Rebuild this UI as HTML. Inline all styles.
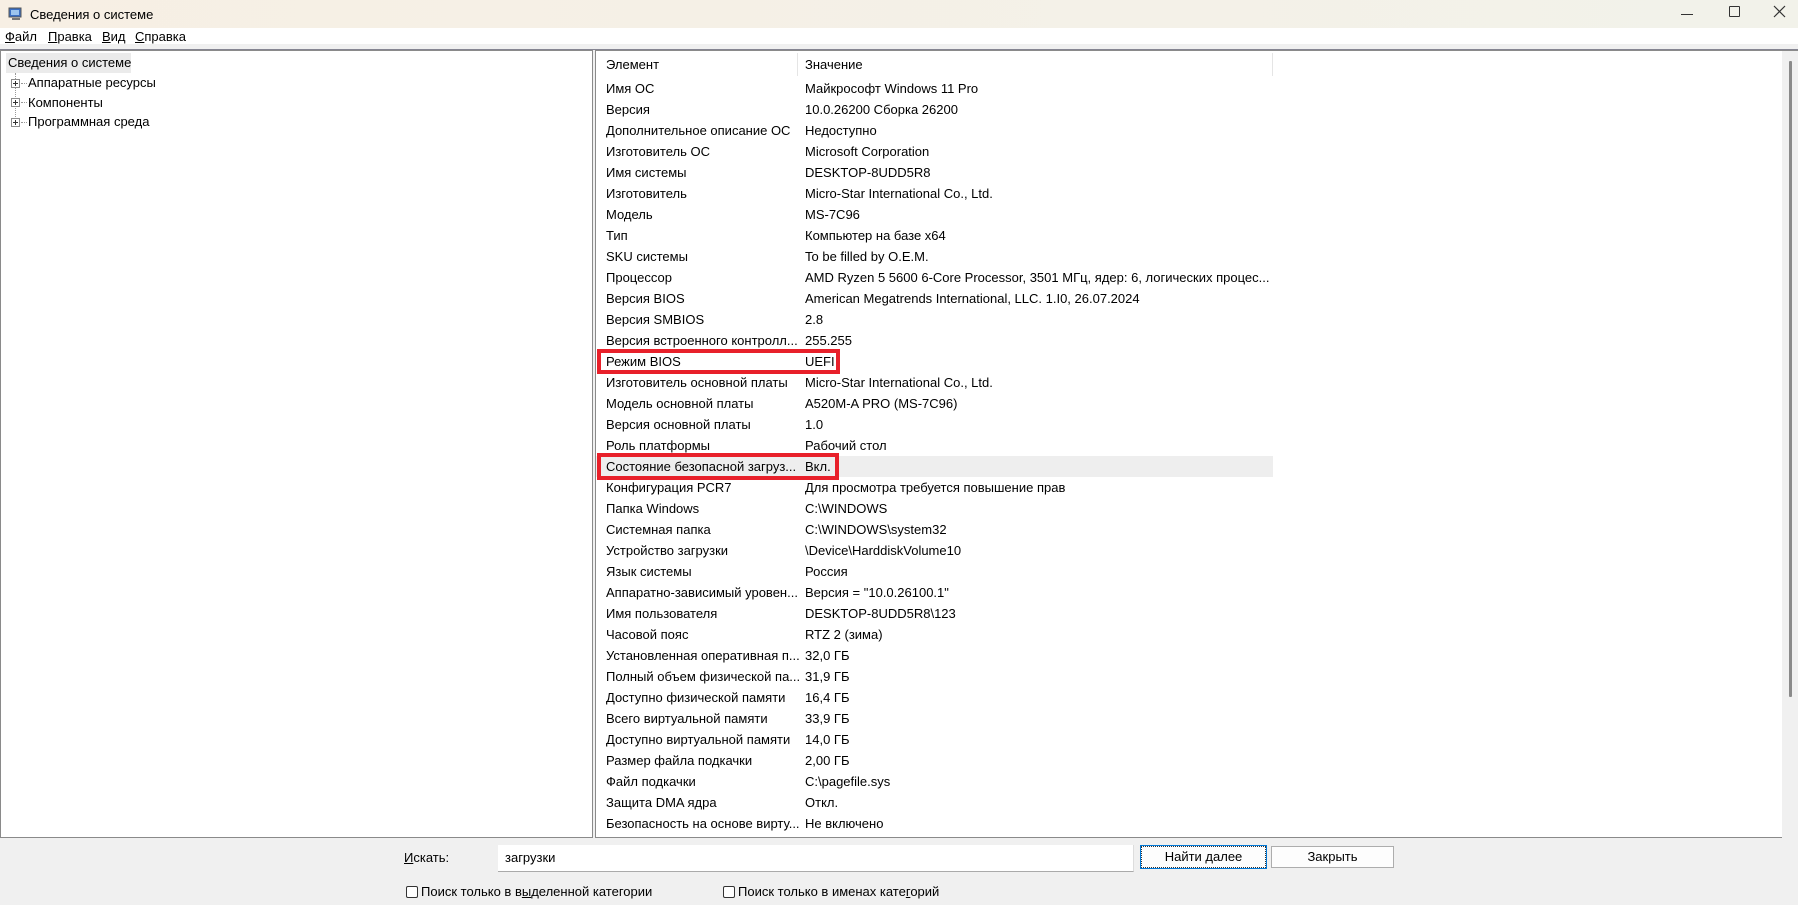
<!DOCTYPE html>
<html><head><meta charset="utf-8"><style>
*{margin:0;padding:0;box-sizing:border-box}
body{width:1798px;height:905px;position:relative;overflow:hidden;background:#f0f0f0;font-family:"Liberation Sans",sans-serif;font-size:13px;color:#000}
.a{position:absolute;white-space:nowrap}
#title{left:0;top:0;width:1798px;height:29px;background:linear-gradient(90deg,#f7efe4,#f2f2ea)}
#left{left:0;top:50px;width:593px;height:788px;background:#fff;border:1px solid #8a8a8a}
#right{left:595px;top:50px;width:1203px;height:788px;background:#fff;border:1px solid #8a8a8a;border-right:none}
.r{position:absolute;left:10px;height:21px;line-height:21px}
.v{position:absolute;left:209px;height:21px;line-height:21px}
.box{position:absolute;border:4px solid #e8202a}
u{text-decoration:underline}
.cb{display:inline-block;width:12px;height:12px;border:1px solid #333;border-radius:2px;background:#fff;vertical-align:-2px;margin-right:3px}
.btn{position:absolute;height:22px;background:#fdfdfd;border:1px solid #adadad;text-align:center;line-height:20px}
.pl{position:absolute;width:9px;height:9px;border:1px solid #8c8c8c;background:#fff}
.pl:before{content:"";position:absolute;left:1px;top:3px;width:5px;height:1px;background:#333}
.pl:after{content:"";position:absolute;left:3px;top:1px;width:1px;height:5px;background:#333}
</style></head><body>
<div class="a" id="title"></div>
<svg class="a" style="left:8px;top:6px" width="16" height="16" viewBox="0 0 16 16"><rect x="1" y="2" width="12" height="9" fill="#3a6fc4" stroke="#555"/><rect x="3" y="4" width="8" height="5" fill="#9cc4ee"/><rect x="4" y="12" width="8" height="2" fill="#777"/></svg>
<div class="a" style="left:30px;top:7px;font-size:13px">Сведения о системе</div>
<div class="a" style="left:1681px;top:14px;width:12px;height:1px;background:#333"></div>
<div class="a" style="left:1729px;top:6px;width:11px;height:11px;border:1px solid #333;border-radius:1px"></div>
<svg class="a" style="left:1773px;top:5px" width="13" height="13"><path d="M1 1L12 12M12 1L1 12" stroke="#333" stroke-width="1.2"/></svg>
<div class="a" style="left:0;top:28px;width:1798px;height:16px;background:#fff"></div>
<div class="a" style="left:5px;top:29px"><u>Ф</u>айл</div>
<div class="a" style="left:48px;top:29px"><u>П</u>равка</div>
<div class="a" style="left:102px;top:29px"><u>В</u>ид</div>
<div class="a" style="left:135px;top:29px"><u>С</u>правка</div>
<div class="a" style="left:0;top:49px;width:1798px;height:1px;background:#858592"></div>
<div class="a" id="left">
<div class="a" style="left:5px;top:2px;width:125px;height:20px;background:#ebebeb"></div>
<div class="a" style="left:7px;top:3px;line-height:18px">Сведения о системе</div>
<div class="a" style="left:14px;top:22px;height:50px;border-left:1px dotted #999"></div>
<div class="pl" style="left:10px;top:28px"></div><div class="a" style="left:20px;top:32px;width:6px;border-top:1px dotted #999"></div><div class="a" style="left:27px;top:23px;line-height:18px">Аппаратные ресурсы</div>
<div class="pl" style="left:10px;top:47px"></div><div class="a" style="left:20px;top:51px;width:6px;border-top:1px dotted #999"></div><div class="a" style="left:27px;top:43px;line-height:18px">Компоненты</div>
<div class="pl" style="left:10px;top:67px"></div><div class="a" style="left:20px;top:71px;width:6px;border-top:1px dotted #999"></div><div class="a" style="left:27px;top:62px;line-height:18px">Программная среда</div>
</div>
<div class="a" id="right">
<div class="a" style="left:201px;top:2px;width:1px;height:23px;background:#e5e5e5"></div>
<div class="a" style="left:676px;top:2px;width:1px;height:23px;background:#e5e5e5"></div>
<div class="a" style="left:0;top:405px;width:677px;height:21px;background:#eeeeee"></div>
<div class="a" style="left:1186px;top:0;width:17px;height:787px;background:#f0f0f0"></div>
<div class="a" style="left:1193px;top:10px;width:3px;height:636px;background:#8a8a8a;border-radius:1px"></div>
<div class="r" style="top:3px">Элемент</div><div class="v" style="top:3px">Значение</div>
<div class="r" style="top:27px">Имя ОС</div><div class="v" style="top:27px">Майкрософт Windows 11 Pro</div>
<div class="r" style="top:48px">Версия</div><div class="v" style="top:48px">10.0.26200 Сборка 26200</div>
<div class="r" style="top:69px">Дополнительное описание ОС</div><div class="v" style="top:69px">Недоступно</div>
<div class="r" style="top:90px">Изготовитель ОС</div><div class="v" style="top:90px">Microsoft Corporation</div>
<div class="r" style="top:111px">Имя системы</div><div class="v" style="top:111px">DESKTOP-8UDD5R8</div>
<div class="r" style="top:132px">Изготовитель</div><div class="v" style="top:132px">Micro-Star International Co., Ltd.</div>
<div class="r" style="top:153px">Модель</div><div class="v" style="top:153px">MS-7C96</div>
<div class="r" style="top:174px">Тип</div><div class="v" style="top:174px">Компьютер на базе x64</div>
<div class="r" style="top:195px">SKU системы</div><div class="v" style="top:195px">To be filled by O.E.M.</div>
<div class="r" style="top:216px">Процессор</div><div class="v" style="top:216px">AMD Ryzen 5 5600 6-Core Processor, 3501 МГц, ядер: 6, логических процес...</div>
<div class="r" style="top:237px">Версия BIOS</div><div class="v" style="top:237px">American Megatrends International, LLC. 1.I0, 26.07.2024</div>
<div class="r" style="top:258px">Версия SMBIOS</div><div class="v" style="top:258px">2.8</div>
<div class="r" style="top:279px">Версия встроенного контролл...</div><div class="v" style="top:279px">255.255</div>
<div class="r" style="top:300px">Режим BIOS</div><div class="v" style="top:300px">UEFI</div>
<div class="r" style="top:321px">Изготовитель основной платы</div><div class="v" style="top:321px">Micro-Star International Co., Ltd.</div>
<div class="r" style="top:342px">Модель основной платы</div><div class="v" style="top:342px">A520M-A PRO (MS-7C96)</div>
<div class="r" style="top:363px">Версия основной платы</div><div class="v" style="top:363px">1.0</div>
<div class="r" style="top:384px">Роль платформы</div><div class="v" style="top:384px">Рабочий стол</div>
<div class="r" style="top:405px">Состояние безопасной загруз...</div><div class="v" style="top:405px">Вкл.</div>
<div class="r" style="top:426px">Конфигурация PCR7</div><div class="v" style="top:426px">Для просмотра требуется повышение прав</div>
<div class="r" style="top:447px">Папка Windows</div><div class="v" style="top:447px">C:\WINDOWS</div>
<div class="r" style="top:468px">Системная папка</div><div class="v" style="top:468px">C:\WINDOWS\system32</div>
<div class="r" style="top:489px">Устройство загрузки</div><div class="v" style="top:489px">\Device\HarddiskVolume10</div>
<div class="r" style="top:510px">Язык системы</div><div class="v" style="top:510px">Россия</div>
<div class="r" style="top:531px">Аппаратно-зависимый уровен...</div><div class="v" style="top:531px">Версия = "10.0.26100.1"</div>
<div class="r" style="top:552px">Имя пользователя</div><div class="v" style="top:552px">DESKTOP-8UDD5R8\123</div>
<div class="r" style="top:573px">Часовой пояс</div><div class="v" style="top:573px">RTZ 2 (зима)</div>
<div class="r" style="top:594px">Установленная оперативная п...</div><div class="v" style="top:594px">32,0 ГБ</div>
<div class="r" style="top:615px">Полный объем физической па...</div><div class="v" style="top:615px">31,9 ГБ</div>
<div class="r" style="top:636px">Доступно физической памяти</div><div class="v" style="top:636px">16,4 ГБ</div>
<div class="r" style="top:657px">Всего виртуальной памяти</div><div class="v" style="top:657px">33,9 ГБ</div>
<div class="r" style="top:678px">Доступно виртуальной памяти</div><div class="v" style="top:678px">14,0 ГБ</div>
<div class="r" style="top:699px">Размер файла подкачки</div><div class="v" style="top:699px">2,00 ГБ</div>
<div class="r" style="top:720px">Файл подкачки</div><div class="v" style="top:720px">C:\pagefile.sys</div>
<div class="r" style="top:741px">Защита DMA ядра</div><div class="v" style="top:741px">Откл.</div>
<div class="r" style="top:762px">Безопасность на основе вирту...</div><div class="v" style="top:762px">Не включено</div>
<div class="box" style="left:1px;top:298px;width:243px;height:25px"></div>
<div class="box" style="left:1px;top:402px;width:242px;height:27px"></div>
</div>
<div class="a" style="left:404px;top:850px"><u>И</u>скать:</div>
<div class="a" style="left:498px;top:845px;width:636px;height:27px;background:#fff;border-bottom:1px solid #aaa;border-right:1px solid #ddd"></div>
<div class="a" style="left:505px;top:850px">загрузки</div>
<div class="btn" style="left:1141px;top:846px;width:125px;border:1px dotted #333;outline:1px solid #0078d7">Найти <u>д</u>алее</div>
<div class="btn" style="left:1271px;top:846px;width:123px">Закрыть</div>
<div class="a" style="left:406px;top:884px"><span class="cb"></span>Поиск только в в<u>ы</u>деленной категории</div>
<div class="a" style="left:723px;top:884px"><span class="cb"></span>Поиск только в именах кате<u>г</u>орий</div>
</body></html>
